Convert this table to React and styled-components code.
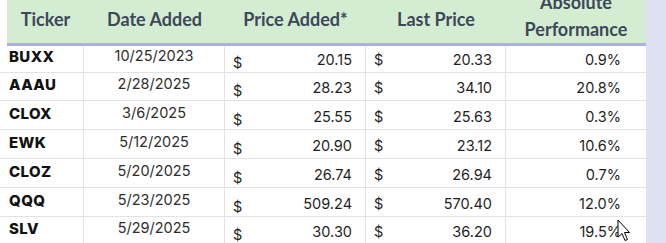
import React from 'react';
import styled, { createGlobalStyle } from 'styled-components';

const GlobalStyle = createGlobalStyle`
  html, body {
    margin: 0;
    padding: 0;
    background: #ffffff;
    overflow: hidden;
  }
`;

const COLS = '7px 77px 141px 141px 140px 140px 20px';

const Sheet = styled.div`
  position: relative;
  width: 666px;
  height: 243px;
  overflow: hidden;
  background: #ffffff;
`;

const HeaderRow = styled.div`
  display: grid;
  grid-template-columns: ${COLS};
  grid-template-rows: 43px;
  height: 43px;
`;

const Gutter = styled.div`
  background: #ffffff;
`;

const HeadCell = styled.div`
  position: relative;
  z-index: 1;
  display: flex;
  align-items: ${p => (p.$tall ? 'flex-end' : 'center')};
  justify-content: center;
  min-height: 0;
  background: #d4edd2;
  box-shadow: 0 3px 0 #a9b3e0;
  color: #3d4859;
  font-family: Lato, 'Open Sans', sans-serif;
  font-weight: 700;
  font-size: 18px;
  line-height: ${p => (p.$tall ? '27px' : '22px')};
  text-align: center;
  padding-bottom: ${p => (p.$tall ? '0' : '6px')};
`;

const Clip = styled.div`
  overflow: hidden;
  height: 43px;
  display: flex;
  align-items: flex-end;
`;

const Side = styled.div`
  background: #dde1f1;
  border-bottom: ${p => (p.$line ? '1px solid #eceef8' : 'none')};
`;

const Row = styled.div`
  display: grid;
  grid-template-columns: ${COLS};
  height: ${p => p.$h}px;
`;

const Cell = styled.div`
  box-sizing: border-box;
  display: flex;
  align-items: flex-start;
  border-bottom: 1px solid #e3e3e3;
  border-right: ${p => (p.$last ? 'none' : '1px solid #e3e3e3')};
  font-family: Inter, 'Liberation Sans', sans-serif;
  font-size: 14.5px;
  line-height: 18px;
  color: #1f1f1f;
`;

const BlankCell = styled(Cell)`
  border-right: none;
`;

const Ticker = styled(Cell)`
  padding: 5px 0 0 2px;
  font-weight: 800;
  font-size: 15px;
  letter-spacing: 0.4px;
  color: #111111;
`;

const DateCell = styled(Cell)`
  justify-content: center;
  padding-top: 4px;
  color: #2e2e2e;
`;

const Money = styled(Cell)`
  justify-content: space-between;
  padding: 8px 13px 0 8px;
`;

const Dollar = styled.span`
  margin-top: ${p => (p.$low ? '3px' : '0')};
`;

const Perf = styled(Cell)`
  justify-content: flex-end;
  padding: 8px 25px 0 0;
`;

const Cursor = styled.svg`
  position: absolute;
  left: 617px;
  top: 219px;
  width: 14px;
  height: 24px;
  pointer-events: none;
`;

const data = [
  { t: 'BUXX', d: '10/25/2023', pa: '20.15', lp: '20.33', perf: '0.9%', h: 28 },
  { t: 'AAAU', d: '2/28/2025', pa: '28.23', lp: '34.10', perf: '20.8%', h: 29 },
  { t: 'CLOX', d: '3/6/2025', pa: '25.55', lp: '25.63', perf: '0.3%', h: 29 },
  { t: 'EWK', d: '5/12/2025', pa: '20.90', lp: '23.12', perf: '10.6%', h: 29 },
  { t: 'CLOZ', d: '5/20/2025', pa: '26.74', lp: '26.94', perf: '0.7%', h: 29 },
  { t: 'QQQ', d: '5/23/2025', pa: '509.24', lp: '570.40', perf: '12.0%', h: 28 },
  { t: 'SLV', d: '5/29/2025', pa: '30.30', lp: '36.20', perf: '19.5%', h: 29 },
];

export default function App() {
  return (
    <>
      <GlobalStyle />
      <Sheet>
        <HeaderRow>
          <Gutter />
          <HeadCell>Ticker</HeadCell>
          <HeadCell>Date Added</HeadCell>
          <HeadCell>Price Added*</HeadCell>
          <HeadCell>Last Price</HeadCell>
          <HeadCell $tall>
            <Clip>
              <span>
                Absolute
                <br />
                Performance
              </span>
            </Clip>
          </HeadCell>
          <Side />
        </HeaderRow>
        {data.map(r => (
          <Row key={r.t} $h={r.h}>
            <BlankCell />
            <Ticker>{r.t}</Ticker>
            <DateCell>{r.d}</DateCell>
            <Money>
              <Dollar $low>$</Dollar>
              <span>{r.pa}</span>
            </Money>
            <Money>
              <Dollar>$</Dollar>
              <span>{r.lp}</span>
            </Money>
            <Perf $last>{r.perf}</Perf>
            <Side $line />
          </Row>
        ))}
        <Cursor viewBox="0 0 14 24">
          <path
            d="M1 1 L1 18 L5 14.5 L8 21.5 L10.5 20.5 L7.5 13.5 L12.5 13.5 Z"
            fill="#ffffff"
            stroke="#000000"
            strokeWidth="1"
            strokeLinejoin="round"
          />
        </Cursor>
      </Sheet>
    </>
  );
}
